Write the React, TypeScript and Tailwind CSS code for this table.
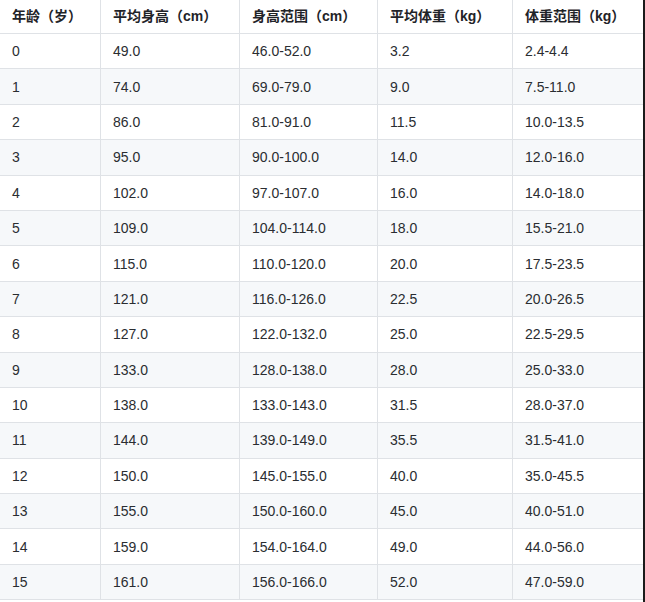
import React from "react";

const headers = ["年龄（岁）", "平均身高（cm）", "身高范围（cm）", "平均体重（kg）", "体重范围（kg）"];

const rows: string[][] = [
  ["0", "49.0", "46.0-52.0", "3.2", "2.4-4.4"],
  ["1", "74.0", "69.0-79.0", "9.0", "7.5-11.0"],
  ["2", "86.0", "81.0-91.0", "11.5", "10.0-13.5"],
  ["3", "95.0", "90.0-100.0", "14.0", "12.0-16.0"],
  ["4", "102.0", "97.0-107.0", "16.0", "14.0-18.0"],
  ["5", "109.0", "104.0-114.0", "18.0", "15.5-21.0"],
  ["6", "115.0", "110.0-120.0", "20.0", "17.5-23.5"],
  ["7", "121.0", "116.0-126.0", "22.5", "20.0-26.5"],
  ["8", "127.0", "122.0-132.0", "25.0", "22.5-29.5"],
  ["9", "133.0", "128.0-138.0", "28.0", "25.0-33.0"],
  ["10", "138.0", "133.0-143.0", "31.5", "28.0-37.0"],
  ["11", "144.0", "139.0-149.0", "35.5", "31.5-41.0"],
  ["12", "150.0", "145.0-155.0", "40.0", "35.0-45.5"],
  ["13", "155.0", "150.0-160.0", "45.0", "40.0-51.0"],
  ["14", "159.0", "154.0-164.0", "49.0", "44.0-56.0"],
  ["15", "161.0", "156.0-166.0", "52.0", "47.0-59.0"],
];

const font = {
  fontFamily: '"Liberation Sans", "Noto Sans CJK SC", sans-serif',
};

export default function App() {
  return (
    <div className="flex w-[645px] h-[602px] bg-white overflow-hidden" style={font}>
      <div className="w-[643px] flex flex-col">
        <div className="grid grid-cols-[101px_139px_138px_135px_130px] h-[34px] border-b border-[#dfe2e6] bg-white">
          {headers.map((h, i) => (
            <div
              key={i}
              className={`flex items-center pl-3 text-[14px] font-bold text-[#1f2328] ${i < 4 ? "border-r border-[#dfe2e6]" : ""}`}
            >
              {h}
            </div>
          ))}
        </div>
        {rows.map((r, ri) => (
          <div
            key={ri}
            className={`grid grid-cols-[101px_139px_138px_135px_130px] h-[35.4px] shrink-0 border-b border-[#dfe2e6] ${ri % 2 === 1 ? "bg-[#f6f8fa]" : "bg-white"}`}
          >
            {r.map((c, ci) => (
              <div
                key={ci}
                className={`flex items-center pl-3 pt-[1px] text-[14px] text-[#2a2d31] ${ci < 4 ? "border-r border-[#dfe2e6]" : ""}`}
              >
                {c}
              </div>
            ))}
          </div>
        ))}
      </div>
      <div className="w-[2px] h-full bg-[#1b1b1b]" />
    </div>
  );
}
